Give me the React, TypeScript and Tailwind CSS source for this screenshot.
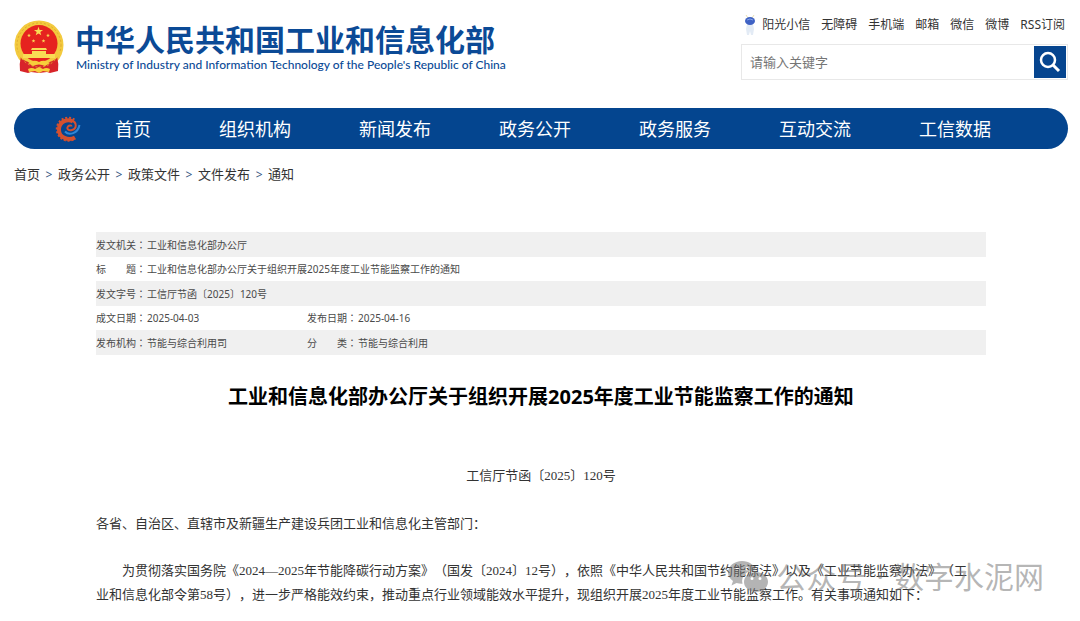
import { Fragment } from "react";

const quickLinks = ["无障碍", "手机端", "邮箱", "微信", "微博", "RSS订阅"];

const navItems = ["首页", "组织机构", "新闻发布", "政务公开", "政务服务", "互动交流", "工信数据"];

const crumbs = ["首页", "政务公开", "政策文件", "文件发布", "通知"];

const metaRows = [
  [{ label: "发文机关", value: "工业和信息化部办公厅" }],
  [{ label: "标　　题", value: "工业和信息化部办公厅关于组织开展2025年度工业节能监察工作的通知" }],
  [{ label: "发文字号", value: "工信厅节函〔2025〕120号" }],
  [
    { label: "成文日期", value: "2025-04-03" },
    { label: "发布日期", value: "2025-04-16" },
  ],
  [
    { label: "发布机构", value: "节能与综合利用司" },
    { label: "分　　类", value: "节能与综合利用" },
  ],
];

const STAR = "M0-5 1.2-1.6 4.8-1.5 1.9.6 2.9 4 0 2-2.9 4-1.9.6-4.8-1.5-1.2-1.6Z";

function Emblem() {
  return (
    <svg viewBox="0 0 50 54" className="h-[54px] w-[50px] shrink-0" aria-hidden="true">
      <circle cx="25" cy="25" r="24.500" fill="#f3ca3e" />
      <path d="M7 36q-2 8-1 15l8 2 3-1 8 1 8-1 3 1 8-2q1-7-1-15Z" fill="#d8242a" />
      <circle cx="25" cy="25" r="22" fill="none" stroke="#e0a92f" strokeWidth="1" strokeDasharray="2 2" />
      <path d="M2 31q4 9 15 12l8-2 8 2q11-3 15-12l-4 2H6Z" fill="#f3ca3e" />
      <circle cx="25" cy="23.500" r="18.500" fill="#e6231f" />
      <g fill="#f9dc55">
        <path d={STAR} transform="translate(24.5 11.5) scale(.95)" />
        <path d={STAR} transform="translate(15 15.500) scale(.4)" />
        <path d={STAR} transform="translate(34 15.500) scale(.4)" />
        <path d={STAR} transform="translate(19.5 21) scale(.4)" />
        <path d={STAR} transform="translate(29.5 21) scale(.4)" />
        <path d="M18 28h14l1 2H17ZM18 31h14v3H18ZM9 34h32v4H9Z" />
      </g>
      <path d="M14 43q6-4 11-1 5-3 11 1l-5 3q-6-3-12 0Z" fill="#f7cf3b" />
      <path d="M14 49q4-2 7 0l4-2 4 2q3-2 7 0l-1 3-6-1-4 2-4-2-6 1Z" fill="#f7cf3b" />
    </svg>
  );
}

function GearLogo() {
  return (
    <svg viewBox="0 0 26 26" className="h-[26px] w-[26px]" fill="none" aria-hidden="true">
      <path d="M19.500 3.500A11.500 11.500 0 1 0 20 22.500" stroke="#d4502f" strokeWidth="2" strokeDasharray="2 1.800" />
      <path d="M20 21.500C14 25 3.500 22 4 13 4.500 5 13 2.500 18 5.500" stroke="#d4502f" strokeWidth="4" />
      <path d="M17 4.500c5 2 5 8 0 9.500-3 1-6-1-4-3.500 1.500-1.500 3.500-1 3.500 0" stroke="#d4502f" strokeWidth="2" />
      <path d="M10 15.500c4 4.500 13 2 14.500-6.500" stroke="#2f86d6" strokeWidth="2" />
    </svg>
  );
}

function Mascot() {
  return (
    <svg viewBox="0 0 12 22" className="h-[22px] w-3" aria-hidden="true">
      <path d="M2 1l2 3M10 1 8 4" stroke="#e9dfb0" />
      <path d="M3 10h6l1 5-1 6H7l-1-4-1 4H3l-1-6Z" fill="#e3ebf5" />
      <ellipse cx="6" cy="7" rx="5" ry="4" fill="#3f62c4" />
      <path d="M3 6q3-2 6 0" stroke="#86a3e6" fill="none" />
    </svg>
  );
}

function Watermark() {
  return (
    <div className="pointer-events-none absolute right-9 bottom-6 flex items-center gap-2 text-[30px] leading-9 text-[#777]/55">
      <svg viewBox="0 0 40 34" className="h-[34px] w-10" aria-hidden="true">
        <path
          fillRule="evenodd"
          d="M14 1C6.500 1 0 6 0 12.500c0 3.500 2 6.500 5 8.500l-1.500 4.500 5-2.500c2 .6 4 .9 6 .8C12.500 16 19 10 28 10.200 26.500 5 21 1 14 1ZM9.500 7a1.800 1.800 0 1 1 0 3.600 1.800 1.800 0 0 1 0-3.600Zm9.500 0a1.800 1.800 0 1 1 0 3.600A1.800 1.800 0 0 1 19 7Z"
          fill="currentColor"
        />
        <path
          fillRule="evenodd"
          d="M28 12c-6.600 0-12 4.500-12 10s5.400 10 12 10c1.500 0 3-.3 4.300-.7l4 2.200-1-3.600c2.800-1.900 4.700-4.700 4.700-7.900 0-5.500-5.400-10-12-10Zm-4 5a1.500 1.500 0 1 1 0 3 1.500 1.500 0 0 1 0-3Zm8 0a1.500 1.500 0 1 1 0 3 1.500 1.500 0 0 1 0-3Z"
          fill="currentColor"
        />
      </svg>
      <span>
        公众号<span className="mx-[2px]"> · </span>数字水泥网
      </span>
    </div>
  );
}

export default function App() {
  return (
    <div className="relative bg-white pr-3 pb-3 pl-[14px] font-['Noto_Sans','Noto_Sans_CJK_SC',sans-serif] text-[#333] [text-spacing-trim:space-all]">
      <header className="flex items-start justify-between">
        <a href="#" className="mt-5 flex items-start gap-[11px] text-[#0b4a96]">
          <Emblem />
          <div className="pt-[2px] whitespace-nowrap">
            <h1 className="text-[30px] leading-9 font-bold">中华人民共和国工业和信息化部</h1>
            <p className="pl-px font-[Lato,sans-serif] text-xs leading-[14px] font-medium">
              Ministry of Industry and Information Technology of the People's Republic of China
            </p>
          </div>
        </a>

        <div className="flex w-[327px] shrink-0 flex-col">
          <nav className="mt-[14px] flex h-[22px] items-center justify-end gap-[11px] pr-[3px] text-xs whitespace-nowrap">
            <a href="#" className="flex items-center gap-[6px]">
              <Mascot />
              阳光小信
            </a>
            {quickLinks.map((link) => (
              <a key={link} href="#">
                {link}
              </a>
            ))}
          </nav>
          <form className="mt-2 flex h-9 items-center border border-[#e8e8e8] pr-px">
            <input
              type="text"
              aria-label="请输入关键字"
              placeholder="请输入关键字"
              className="h-full min-w-0 flex-1 px-2 text-[13px] outline-none placeholder:text-[#757575]"
            />
            <button
              type="submit"
              aria-label="搜索"
              className="flex h-8 w-8 items-center justify-center bg-[#06458f] text-white"
            >
              <svg viewBox="0 0 22 22" className="h-[22px] w-[22px]" fill="none" stroke="currentColor" aria-hidden="true">
                <circle cx="9" cy="9" r="7" strokeWidth="2.500" />
                <path d="m14 14 6 6" strokeWidth="3" />
              </svg>
            </button>
          </form>
        </div>
      </header>

      <nav className="mt-7 flex h-[41px] items-center rounded-full bg-[#04458f] pl-[41px] text-lg whitespace-nowrap text-white">
        <GearLogo />
        <div className="ml-[34px] flex gap-[68px]">
          {navItems.map((item) => (
            <a key={item} href="#">
              {item}
            </a>
          ))}
        </div>
      </nav>

      <nav className="mt-4 flex h-5 items-center text-[13px]">
        {crumbs.map((crumb, i) => (
          <Fragment key={crumb}>
            {i > 0 && <span className="w-[18px] text-center text-xs text-[#35557f]">&gt;</span>}
            <a href="#">{crumb}</a>
          </Fragment>
        ))}
      </nav>

      <main className="mx-auto mt-[47px] max-w-[890px]">
        <table className="w-full table-fixed text-left text-[10px] leading-4 text-[#4a4a4a]">
          <colgroup>
            <col className="w-[51px]" />
            <col className="w-40" />
            <col className="w-[51px]" />
            <col />
          </colgroup>
          <tbody>
            {metaRows.map((row) => (
              <tr key={row[0].label} className="h-6 odd:h-[25px] odd:bg-[#f0f0f0]">
                {row.map((cell) => (
                  <Fragment key={cell.label}>
                    <th scope="row" className="p-0 font-normal whitespace-nowrap">
                      {cell.label}
                      <span className="font-['Noto_Sans_CJK_JP',sans-serif]">：</span>
                    </th>
                    <td colSpan={row.length === 1 ? 3 : 1} className="p-0">
                      {cell.value}
                    </td>
                  </Fragment>
                ))}
              </tr>
            ))}
          </tbody>
        </table>

        <h2 className="mt-7 text-center text-xl leading-7 font-bold text-black">
          工业和信息化部办公厅关于组织开展2025年度工业节能监察工作的通知
        </h2>

        <article className="mt-[53px] font-['Liberation_Serif','Noto_Sans_CJK_SC',sans-serif] text-[13px] leading-6">
          <p className="text-center">工信厅节函〔2025〕120号</p>
          <p className="mt-6">各省、自治区、直辖市及新疆生产建设兵团工业和信息化主管部门：</p>
          <p className="mt-[23px] indent-[26px]">
            为贯彻落实国务院《2024—2025年节能降碳行动方案》（国发〔2024〕12号），依照《中华人民共和国节约能源法》以及《工业节能监察办法》（工
            <br />
            业和信息化部令第58号），进一步严格能效约束，推动重点行业领域能效水平提升，现组织开展2025年度工业节能监察工作。有关事项通知如下：
          </p>
        </article>
      </main>

      <Watermark />
    </div>
  );
}
